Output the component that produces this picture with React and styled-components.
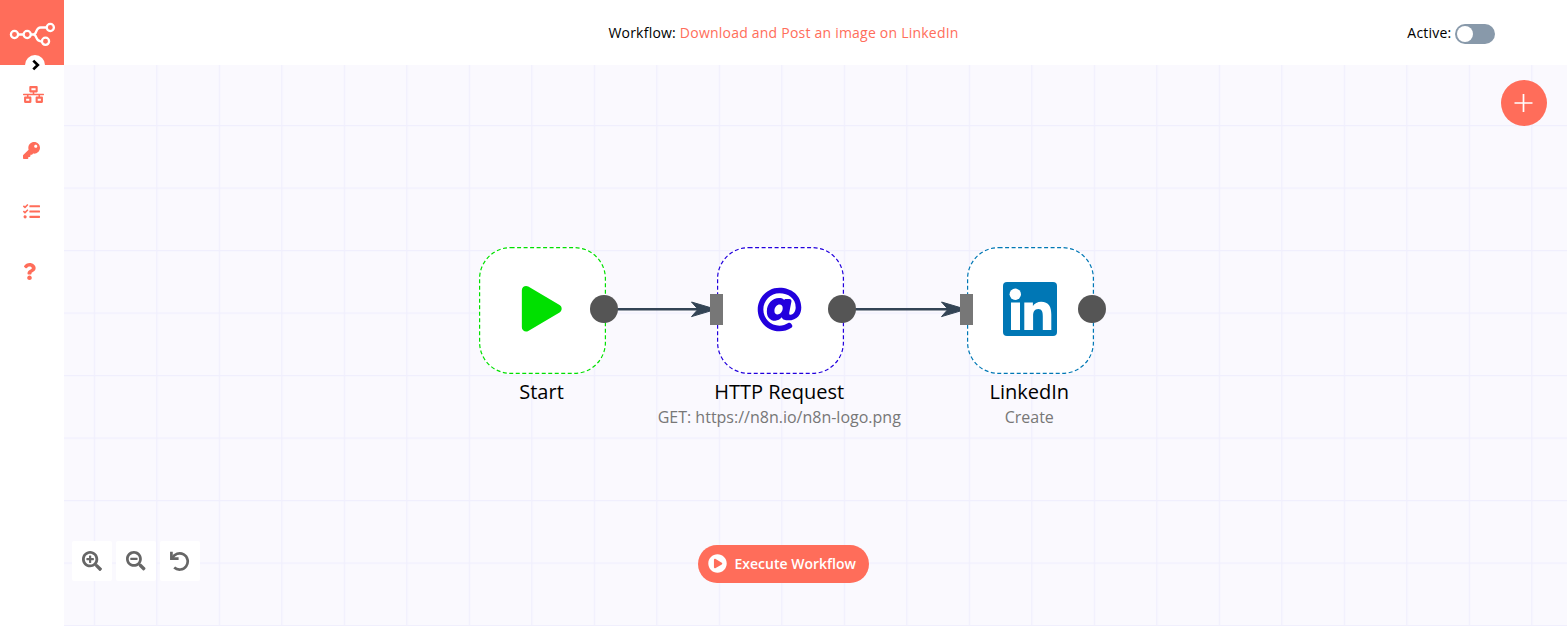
import React from 'react';
import styled, { createGlobalStyle } from 'styled-components';
import {
  FaNetworkWired, FaKey, FaTasks, FaQuestion, FaSearchPlus, FaSearchMinus,
  FaPlayCircle, FaPlay, FaAt,
} from 'react-icons/fa';

const CORAL = '#ff6d5a';
const WIRE = '#334455';

const GlobalStyle = createGlobalStyle`
  * { box-sizing: border-box; }
  body {
    margin: 0;
    background: #fff;
    color: #000;
    font-family: "Open Sans", "Noto Sans", sans-serif;
    font-size: 14px;
  }
  button { font: inherit; border: 0; padding: 0; cursor: pointer; }
  svg { display: block; }
`;

const Page = styled.div`
  display: flex;
  width: 1567px;
  height: 626px;
  overflow: hidden;
`;

const Sidebar = styled.nav`
  position: relative;
  width: 64px;
  flex: none;
  background: #fff;
`;

const LogoBox = styled.div`
  height: 65px;
  background: ${CORAL};
`;

const ExpandButton = styled.button`
  position: absolute;
  left: 25px;
  top: 55px;
  width: 20px;
  height: 20px;
  border-radius: 50%;
  background: #fff;
`;

const Menu = styled.ul`
  list-style: none;
  margin: 0;
  padding: 0 0 0 23px;
  color: ${CORAL};
`;

const MenuItem = styled.li`
  display: flex;
  align-items: center;
  height: ${(p) => p.$height}px;
  margin-left: ${(p) => p.$shift || 0}px;
`;

const Main = styled.main`
  flex: 1;
  display: flex;
  flex-direction: column;
  min-width: 0;
`;

const Header = styled.header`
  display: grid;
  grid-template-columns: 1fr auto 1fr;
  align-items: center;
  height: 65px;
  padding: 0 72px 0 8px;
  background: #fff;
  line-height: 20px;
  letter-spacing: 0.22px;
`;

const Title = styled.div`
  grid-column: 2;
`;

const WorkflowName = styled.span`
  color: ${CORAL};
`;

const ActiveSetting = styled.div`
  display: flex;
  justify-content: flex-end;
  align-items: center;
  gap: 3.5px;
`;

const Switch = styled.span`
  width: 40px;
  height: 20px;
  margin-top: 2px;
  padding: 2px;
  border-radius: 10px;
  background: #8899aa;
`;

const SwitchKnob = styled.span`
  display: block;
  width: 16px;
  height: 16px;
  border-radius: 50%;
  background: #fff;
`;

const Canvas = styled.section`
  position: relative;
  flex: 1;
  background-color: #faf9fe;
  overflow: hidden;
`;

const Layer = styled.svg`
  position: absolute;
  inset: 0;
  width: 100%;
  height: 100%;
`;

const Node = styled.div`
  position: absolute;
  left: ${(p) => p.$x}px;
  top: 182px;
  width: 127px;
  height: 127px;
`;

const NodeBox = styled.div`
  position: relative;
  display: flex;
  align-items: center;
  justify-content: center;
  width: 127px;
  height: 127px;
  padding: 0 2px 3px 0;
  background: #fff;
  border-radius: 31px;
  color: ${(p) => p.$color};
`;

const Outline = styled.svg`
  position: absolute;
  inset: 0;
`;

const NodeLabel = styled.div`
  position: absolute;
  top: 131px;
  left: 50%;
  transform: translateX(-50%);
  margin-left: -1.25px;
  text-align: center;
  white-space: nowrap;
`;

const NodeName = styled.div`
  font-size: 20px;
  line-height: 27px;
`;

const NodeNote = styled.div`
  font-size: 16px;
  line-height: 24px;
  color: #777;
`;

const OutputDot = styled.span`
  position: absolute;
  right: -11.5px;
  top: 48px;
  width: 28px;
  height: 28px;
  border-radius: 50%;
  background: #555;
`;

const InputBar = styled.span`
  position: absolute;
  left: -7px;
  top: 47px;
  width: 13px;
  height: 31px;
  background: #777;
`;

const AddButton = styled.button`
  position: absolute;
  right: 20px;
  top: 15px;
  display: grid;
  place-items: center;
  width: 46px;
  height: 46px;
  border-radius: 50%;
  background: ${CORAL};
`;

const ZoomControls = styled.div`
  position: absolute;
  left: 8px;
  bottom: 45px;
  display: flex;
  gap: 4px;
`;

const ZoomButton = styled.button`
  display: grid;
  place-items: center;
  width: 40px;
  height: 40px;
  border-radius: 2px;
  background: #fff;
  color: #666;
`;

const ExecuteButton = styled.button`
  position: absolute;
  left: 634px;
  bottom: 43px;
  display: flex;
  align-items: center;
  gap: 8px;
  width: 171px;
  height: 38px;
  padding: 0 0 1px 9.5px;
  border-radius: 19px;
  background: ${CORAL};
  color: #fff;
  font-weight: 600;
  white-space: nowrap;
`;

const Logo = () => (
  <svg width="64" height="65" fill="none" stroke="#fff" strokeWidth="2.3">
    <circle cx="14.500" cy="34.500" r="3.600" />
    <circle cx="27.200" cy="34.500" r="3.600" />
    <circle cx="50.300" cy="27.500" r="3.600" />
    <circle cx="45.500" cy="41.300" r="3.600" />
    <path d="M18.100 34.500h5.500M30.800 34.500h2.700M46.700 27.500h-6c-5.500 0-3.500 7-7.300 7 3.800 0 1.800 6.800 7.300 6.800h1.200" />
  </svg>
);

const LinkedInIcon = () => (
  <svg width="54" height="54" viewBox="0 0 54 54">
    <rect width="54" height="54" rx="4" fill="#0077b5" />
    <g fill="#fff">
      <circle cx="12.300" cy="12.300" r="5.700" />
      <path d="M8 20.500h9V48H8zM21.300 20.500h8.600v3.600c1.600-2.700 4.700-4.400 8.200-4.400 7.700 0 10.200 5.100 10.200 12.600V48h-8.500V34.500c0-4.500-.9-7.400-4.400-7.400-4.200 0-5.300 3-5.300 7V48h-8.800z" />
    </g>
  </svg>
);

const UndoIcon = () => (
  <svg width="20" height="20" fill="none" stroke="currentColor" strokeWidth="2.700">
    <path d="M1.400 .8v6.900h7.200" />
    <path d="M2.200 7.200A8.100 8.100 0 1 1 4.200 16.500" />
  </svg>
);

const nodes = [
  { x: 415.25, color: '#00e000', name: 'Start', icon: <FaPlay size={45.5} /> },
  {
    x: 653, color: '#2200dd', name: 'HTTP Request', input: true,
    note: 'GET: https://n8n.io/n8n-logo.png', icon: <FaAt size={45} />,
  },
  { x: 903, color: '#0077b5', name: 'LinkedIn', input: true, note: 'Create', icon: <LinkedInIcon /> },
];

const Grid = () => (
  <Layer>
    <defs>
      <pattern id="grid" x="29.75" y="60" width="62.5" height="62.5" patternUnits="userSpaceOnUse">
        <path d="M0 0h62.500v1.250H1.250V62.500H0z" fill="#f0effd" />
      </pattern>
    </defs>
    <rect width="100%" height="100%" fill="url(#grid)" />
  </Layer>
);

const Wire = ({ from, to }) => (
  <g>
    <path d={`M${from} 244.300H${to - 10}`} stroke={WIRE} strokeWidth="2.5" />
    <path d={`M${to + 4} 244.300l-24.500-7.300 6.500 7.300-6.500 7.300z`} fill={WIRE} stroke={WIRE} strokeLinejoin="round" />
  </g>
);

export default function App() {
  return (
    <Page>
      <GlobalStyle />
      <Sidebar>
        <LogoBox><Logo /></LogoBox>
        <ExpandButton aria-label="Expand menu">
          <svg width="20" height="20" fill="none" stroke="#000" strokeWidth="2.700">
            <path d="M8.300 5.600l4.500 4.400-4.500 4.400" />
          </svg>
        </ExpandButton>
        <Menu>
          <MenuItem $height={59}><FaNetworkWired size={21} /></MenuItem>
          <MenuItem $height={53}><FaKey size={17} /></MenuItem>
          <MenuItem $height={69}><FaTasks size={17} /></MenuItem>
          <MenuItem $height={51} $shift={-2}><FaQuestion size={17} /></MenuItem>
        </Menu>
      </Sidebar>
      <Main>
        <Header>
          <Title>Workflow: <WorkflowName>Download and Post an image on LinkedIn</WorkflowName></Title>
          <ActiveSetting>Active: <Switch><SwitchKnob /></Switch></ActiveSetting>
        </Header>
        <Canvas>
          <Grid />
          {nodes.map((n) => (
            <Node key={n.name} $x={n.x}>
              <NodeBox $color={n.color}>
                <Outline width="127" height="127" fill="none">
                  <rect x="0.600" y="0.600" width="125.800" height="125.800" rx="31" stroke="currentColor" strokeWidth="1.2" strokeDasharray="4 2.500" />
                </Outline>
                {n.icon}
              </NodeBox>
              <NodeLabel>
                <NodeName>{n.name}</NodeName>
                {n.note && <NodeNote>{n.note}</NodeNote>}
              </NodeLabel>
            </Node>
          ))}
          <Layer>
            <Wire from={550} to={648} />
            <Wire from={788} to={898} />
          </Layer>
          {nodes.map((n) => (
            <Node key={n.name} $x={n.x}>
              {n.input && <InputBar />}
              <OutputDot />
            </Node>
          ))}
          <AddButton aria-label="Add node">
            <svg width="20" height="20" stroke="#fff" strokeWidth="1.7"><path d="M.5 10h18M9.500 1v18" /></svg>
          </AddButton>
          <ZoomControls>
            <ZoomButton aria-label="Zoom in"><FaSearchPlus size={20} /></ZoomButton>
            <ZoomButton aria-label="Zoom out"><FaSearchMinus size={19.5} /></ZoomButton>
            <ZoomButton aria-label="Reset zoom"><UndoIcon /></ZoomButton>
          </ZoomControls>
          <ExecuteButton><FaPlayCircle size={19} />Execute Workflow</ExecuteButton>
        </Canvas>
      </Main>
    </Page>
  );
}
